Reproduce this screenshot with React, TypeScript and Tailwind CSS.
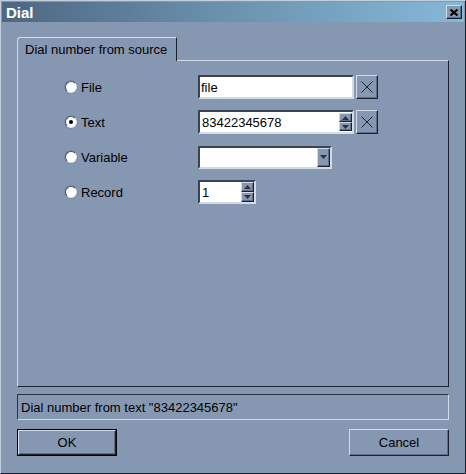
const raised =
  'bg-[#8698b1] border border-t-[#d3dce6] border-l-[#d3dce6] border-r-[#1b222c] border-b-[#1b222c] shadow-[inset_-1px_-1px_0_#5d6e86]'
const sunken =
  'bg-white border-2 border-t-[#3a4350] border-l-[#3a4350] border-r-[#d3dce6] border-b-[#d3dce6]'

function Arrow({ dir }: { dir: 'up' | 'down' }) {
  return (
    <svg width="7" height="4" viewBox="0 0 7 4" className="block">
      {dir === 'up' ? (
        <polygon points="3.5,0 7,4 0,4" fill="#2b323d" />
      ) : (
        <polygon points="0,0 7,0 3.5,4" fill="#2b323d" />
      )}
    </svg>
  )
}

function Spin() {
  return (
    <div className="flex flex-col w-[13px] h-full">
      <div className={`${raised} flex-1 flex items-center justify-center`}>
        <Arrow dir="up" />
      </div>
      <div className={`${raised} flex-1 flex items-center justify-center`}>
        <Arrow dir="down" />
      </div>
    </div>
  )
}

function ClearButton() {
  return (
    <div className={`${raised} w-[22px] h-[24px] flex items-center justify-center`}>
      <svg width="12" height="12" viewBox="0 0 12 12">
        <path d="M0.5 0.5 L11.5 11.5 M11.5 0.5 L0.5 11.5" stroke="#1b222c" strokeWidth="1" />
      </svg>
    </div>
  )
}

function Radio({ label, checked }: { label: string; checked?: boolean }) {
  return (
    <div className="w-[180px] pl-[47px] flex items-center gap-[4px] shrink-0">
      <div className="w-[12px] h-[12px] rounded-full bg-white border border-t-[#4a5361] border-l-[#4a5361] border-r-[#e0e6ee] border-b-[#e0e6ee] shadow-[0_0_0_1px_#7a8ca5] flex items-center justify-center">
        {checked && <div className="w-[4px] h-[4px] rounded-full bg-black" />}
      </div>
      <span>{label}</span>
    </div>
  )
}

export default function App() {
  return (
    <div className="w-[466px] h-[474px] bg-[#8698b1] border border-t-[#c3cedb] border-l-[#c3cedb] border-r-[#1b222c] border-b-[#1b222c] p-[1px] flex flex-col font-['Liberation_Sans',Arial,sans-serif] text-[13px] text-black leading-none">
      {/* title bar */}
      <div className="h-[20px] flex items-center justify-between pl-[4px] pr-[2px] bg-gradient-to-r from-[#4e6782] via-[#6b93b0] to-[#86b8d8]">
        <span className="text-white font-bold text-[15px]">Dial</span>
        <div className={`${raised} w-[16px] h-[14px] flex items-center justify-center`}>
          <svg width="8" height="7" viewBox="0 0 8 7">
            <path d="M0.5 0.5 L7.5 6.5 M7.5 0.5 L0.5 6.5" stroke="#000" strokeWidth="2" />
          </svg>
        </div>
      </div>

      <div className="flex-1 flex flex-col px-[15px] pt-[15px]">
        {/* tab */}
        <div className="relative z-10 -mb-px w-[160px] h-[24px] bg-[#8698b1] border border-b-0 border-t-[#d3dce6] border-l-[#d3dce6] border-r-[#1b222c] rounded-tl-[3px] flex items-center pl-[7px]">
          Dial number from source
        </div>

        {/* panel */}
        <div className="h-[327px] border border-t-[#d3dce6] border-l-[#d3dce6] border-r-[#1b222c] border-b-[#1b222c] pt-[14px] flex flex-col gap-[11px]">
          <div className="flex items-center h-[24px]">
            <Radio label="File" />
            <div className={`${sunken} w-[156px] h-[24px] flex items-center pl-[1px]`}>file</div>
            <div className="ml-[2px]">
              <ClearButton />
            </div>
          </div>

          <div className="flex items-center h-[24px]">
            <Radio label="Text" checked />
            <div className={`${sunken} w-[156px] h-[24px] flex items-center`}>
              <span className="flex-1 pl-[2px]">83422345678</span>
              <div className="h-full py-[1px]">
                <Spin />
              </div>
            </div>
            <div className="ml-[2px]">
              <ClearButton />
            </div>
          </div>

          <div className="flex items-center h-[24px]">
            <Radio label="Variable" />
            <div className={`${sunken} w-[134px] h-[23px] flex justify-end`}>
              <div className={`${raised} w-[13px] h-full flex items-center justify-center`}>
                <Arrow dir="down" />
              </div>
            </div>
          </div>

          <div className="flex items-center h-[24px]">
            <Radio label="Record" />
            <div className={`${sunken} w-[58px] h-[24px] flex items-center`}>
              <span className="flex-1 pl-[2px]">1</span>
              <Spin />
            </div>
          </div>
        </div>

        {/* status */}
        <div className="mt-[7px] h-[26px] border border-t-[#2a323e] border-l-[#2a323e] border-r-[#d3dce6] border-b-[#d3dce6] flex items-center pl-[3px]">
          Dial number from text "83422345678"
        </div>

        {/* buttons */}
        <div className="mt-[9px] flex justify-between">
          <div className="w-[100px] h-[27px] border border-black">
            <div className={`${raised} w-full h-full flex items-center justify-center`}>OK</div>
          </div>
          <div className={`${raised} w-[100px] h-[27px] flex items-center justify-center`}>Cancel</div>
        </div>
      </div>
    </div>
  )
}
